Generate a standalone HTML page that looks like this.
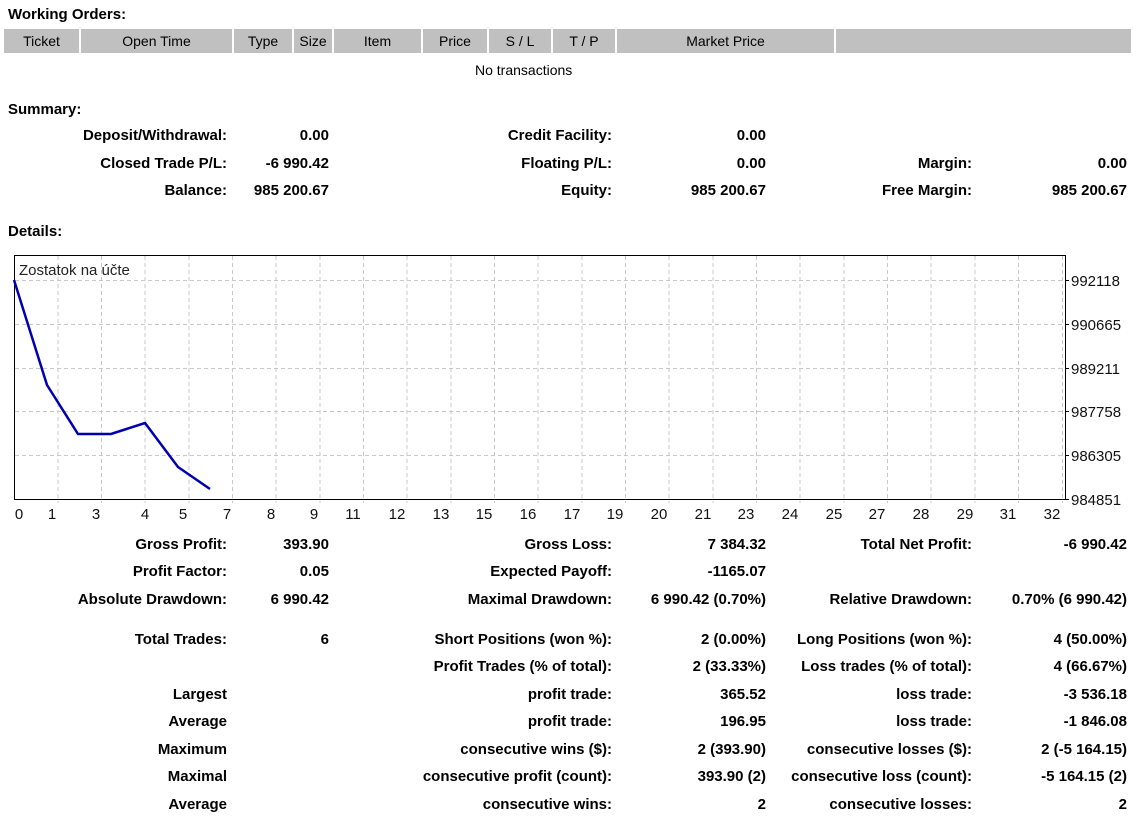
<!DOCTYPE html>
<html><head><meta charset="utf-8"><style>
body{margin:0;width:1137px;height:821px;background:#fff;font-family:"Liberation Sans",sans-serif;font-size:14px;color:#000;position:relative;overflow:hidden}
.t{position:absolute;left:0;white-space:nowrap;text-align:right;font-weight:bold;line-height:16px;font-size:15px}
.h{position:absolute;font-weight:bold;left:8px;line-height:16px;font-size:15px}
.th{position:absolute;top:29px;height:24px;background:#c0c0c0;line-height:24px;text-align:center;font-size:14px}
</style></head><body>
<div class="h" style="top:7px">Working Orders:</div>
<div class="th" style="left:4px;width:75px">Ticket</div>
<div class="th" style="left:81px;width:151px">Open Time</div>
<div class="th" style="left:234px;width:58px">Type</div>
<div class="th" style="left:294px;width:38px">Size</div>
<div class="th" style="left:334px;width:87px">Item</div>
<div class="th" style="left:423px;width:64px">Price</div>
<div class="th" style="left:489px;width:62px">S / L</div>
<div class="th" style="left:553px;width:62px">T / P</div>
<div class="th" style="left:617px;width:217px">Market Price</div>
<div class="th" style="left:836px;width:295px"></div>
<div style="position:absolute;top:62px;left:475px;line-height:16px">No transactions</div>
<div class="h" style="top:102px">Summary:</div>

<div class="t" style="top:128px;width:227px">Deposit/Withdrawal:</div><div class="t" style="top:128px;width:329px">0.00</div>
<div class="t" style="top:128px;width:612px">Credit Facility:</div><div class="t" style="top:128px;width:766px">0.00</div>
<div class="t" style="top:156px;width:227px">Closed Trade P/L:</div><div class="t" style="top:156px;width:329px">-6 990.42</div>
<div class="t" style="top:156px;width:612px">Floating P/L:</div><div class="t" style="top:156px;width:766px">0.00</div>
<div class="t" style="top:156px;width:972px">Margin:</div><div class="t" style="top:156px;width:1127px">0.00</div>
<div class="t" style="top:183px;width:227px">Balance:</div><div class="t" style="top:183px;width:329px">985 200.67</div>
<div class="t" style="top:183px;width:612px">Equity:</div><div class="t" style="top:183px;width:766px">985 200.67</div>
<div class="t" style="top:183px;width:972px">Free Margin:</div><div class="t" style="top:183px;width:1127px">985 200.67</div>
<div class="h" style="top:224px">Details:</div>

<svg style="position:absolute;left:0;top:0" width="1137" height="530">
<g stroke="#c8c8c8" stroke-dasharray="4,3" stroke-width="1">
<line x1="15" y1="280.5" x2="1065" y2="280.5"/><line x1="15" y1="324.5" x2="1065" y2="324.5"/><line x1="15" y1="368.5" x2="1065" y2="368.5"/><line x1="15" y1="411.5" x2="1065" y2="411.5"/><line x1="15" y1="455.5" x2="1065" y2="455.5"/>
<line x1="58" y1="256" x2="58" y2="503"/><line x1="101.5" y1="256" x2="101.5" y2="503"/><line x1="145" y1="256" x2="145" y2="503"/><line x1="189" y1="256" x2="189" y2="503"/><line x1="232.5" y1="256" x2="232.5" y2="503"/><line x1="276" y1="256" x2="276" y2="503"/><line x1="320" y1="256" x2="320" y2="503"/><line x1="363.5" y1="256" x2="363.5" y2="503"/><line x1="407" y1="256" x2="407" y2="503"/><line x1="451" y1="256" x2="451" y2="503"/><line x1="494.5" y1="256" x2="494.5" y2="503"/><line x1="538" y1="256" x2="538" y2="503"/><line x1="582" y1="256" x2="582" y2="503"/><line x1="625.5" y1="256" x2="625.5" y2="503"/><line x1="669" y1="256" x2="669" y2="503"/><line x1="713" y1="256" x2="713" y2="503"/><line x1="756.5" y1="256" x2="756.5" y2="503"/><line x1="800" y1="256" x2="800" y2="503"/><line x1="844" y1="256" x2="844" y2="503"/><line x1="887.5" y1="256" x2="887.5" y2="503"/><line x1="931" y1="256" x2="931" y2="503"/><line x1="975" y1="256" x2="975" y2="503"/><line x1="1018.5" y1="256" x2="1018.5" y2="503"/><line x1="1062.5" y1="256" x2="1062.5" y2="503"/>
</g>
<rect x="14.5" y="255.5" width="1051" height="244" fill="none" stroke="#000" stroke-width="1"/>
<g stroke="#000"><line x1="1066" y1="280.5" x2="1069" y2="280.5"/><line x1="1066" y1="324.5" x2="1069" y2="324.5"/><line x1="1066" y1="368.5" x2="1069" y2="368.5"/><line x1="1066" y1="411.5" x2="1069" y2="411.5"/><line x1="1066" y1="455.5" x2="1069" y2="455.5"/><line x1="1066" y1="499.5" x2="1069" y2="499.5"/></g>
<polyline points="14,280 47,385 78,434 111,434 145,423 178,467 210,489" fill="none" stroke="#0000b0" stroke-width="2.5"/>
<text x="19" y="275" font-family="Liberation Sans,sans-serif" font-size="15" fill="#222">Zostatok na účte</text>
<g font-family="Liberation Sans,sans-serif" font-size="15" fill="#111">
<text x="1071" y="286">992118</text><text x="1071" y="330">990665</text><text x="1071" y="374">989211</text><text x="1071" y="417">987758</text><text x="1071" y="461">986305</text><text x="1071" y="505">984851</text>
</g>
<g font-family="Liberation Sans,sans-serif" font-size="15" fill="#111" text-anchor="middle">
<text x="19" y="519">0</text><text x="52" y="519">1</text><text x="96" y="519">3</text><text x="145" y="519">4</text><text x="183" y="519">5</text><text x="227" y="519">7</text><text x="271" y="519">8</text><text x="314" y="519">9</text><text x="353" y="519">11</text><text x="397" y="519">12</text><text x="441" y="519">13</text><text x="484" y="519">15</text><text x="528" y="519">16</text><text x="572" y="519">17</text><text x="615" y="519">19</text><text x="659" y="519">20</text><text x="703" y="519">21</text><text x="746" y="519">23</text><text x="790" y="519">24</text><text x="834" y="519">25</text><text x="877" y="519">27</text><text x="921" y="519">28</text><text x="965" y="519">29</text><text x="1008" y="519">31</text><text x="1052" y="519">32</text>
</g>
</svg>

<div class="t" style="top:537px;width:227px">Gross Profit:</div><div class="t" style="top:537px;width:329px">393.90</div>
<div class="t" style="top:537px;width:612px">Gross Loss:</div><div class="t" style="top:537px;width:766px">7 384.32</div>
<div class="t" style="top:537px;width:972px">Total Net Profit:</div><div class="t" style="top:537px;width:1127px">-6 990.42</div>
<div class="t" style="top:564px;width:227px">Profit Factor:</div><div class="t" style="top:564px;width:329px">0.05</div>
<div class="t" style="top:564px;width:612px">Expected Payoff:</div><div class="t" style="top:564px;width:766px">-1165.07</div>
<div class="t" style="top:592px;width:227px">Absolute Drawdown:</div><div class="t" style="top:592px;width:329px">6 990.42</div>
<div class="t" style="top:592px;width:612px">Maximal Drawdown:</div><div class="t" style="top:592px;width:766px">6 990.42 (0.70%)</div>
<div class="t" style="top:592px;width:972px">Relative Drawdown:</div><div class="t" style="top:592px;width:1127px">0.70% (6 990.42)</div>

<div class="t" style="top:632px;width:227px">Total Trades:</div><div class="t" style="top:632px;width:329px">6</div>
<div class="t" style="top:632px;width:612px">Short Positions (won %):</div><div class="t" style="top:632px;width:766px">2 (0.00%)</div>
<div class="t" style="top:632px;width:972px">Long Positions (won %):</div><div class="t" style="top:632px;width:1127px">4 (50.00%)</div>
<div class="t" style="top:659px;width:612px">Profit Trades (% of total):</div><div class="t" style="top:659px;width:766px">2 (33.33%)</div>
<div class="t" style="top:659px;width:972px">Loss trades (% of total):</div><div class="t" style="top:659px;width:1127px">4 (66.67%)</div>
<div class="t" style="top:687px;width:227px">Largest</div>
<div class="t" style="top:687px;width:612px">profit trade:</div><div class="t" style="top:687px;width:766px">365.52</div>
<div class="t" style="top:687px;width:972px">loss trade:</div><div class="t" style="top:687px;width:1127px">-3 536.18</div>
<div class="t" style="top:714px;width:227px">Average</div>
<div class="t" style="top:714px;width:612px">profit trade:</div><div class="t" style="top:714px;width:766px">196.95</div>
<div class="t" style="top:714px;width:972px">loss trade:</div><div class="t" style="top:714px;width:1127px">-1 846.08</div>
<div class="t" style="top:742px;width:227px">Maximum</div>
<div class="t" style="top:742px;width:612px">consecutive wins ($):</div><div class="t" style="top:742px;width:766px">2 (393.90)</div>
<div class="t" style="top:742px;width:972px">consecutive losses ($):</div><div class="t" style="top:742px;width:1127px">2 (-5 164.15)</div>
<div class="t" style="top:769px;width:227px">Maximal</div>
<div class="t" style="top:769px;width:612px">consecutive profit (count):</div><div class="t" style="top:769px;width:766px">393.90 (2)</div>
<div class="t" style="top:769px;width:972px">consecutive loss (count):</div><div class="t" style="top:769px;width:1127px">-5 164.15 (2)</div>
<div class="t" style="top:797px;width:227px">Average</div>
<div class="t" style="top:797px;width:612px">consecutive wins:</div><div class="t" style="top:797px;width:766px">2</div>
<div class="t" style="top:797px;width:972px">consecutive losses:</div><div class="t" style="top:797px;width:1127px">2</div>
</body></html>
